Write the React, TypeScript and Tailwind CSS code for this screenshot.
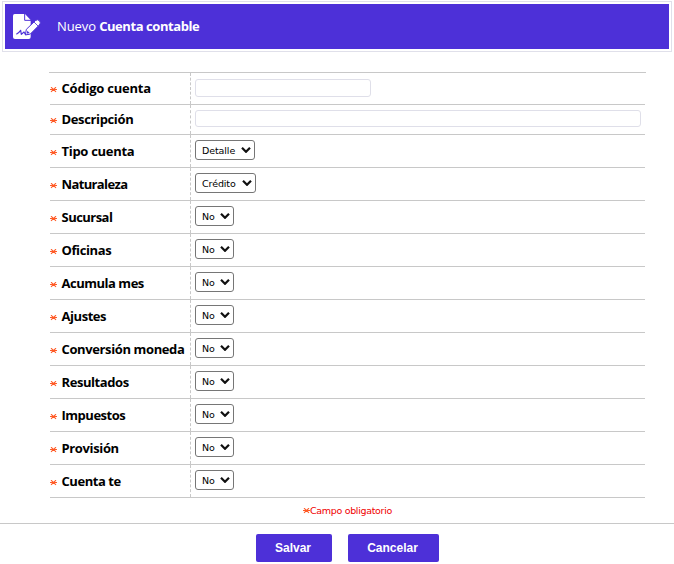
import React from "react";

type Field = {
  label: string;
  row: string;
  input?: string;
  select?: string;
  value?: string;
  text: string;
};

const STANDARD = "h-[33px]";
const SHORT_SELECT = "w-[39px]";

const fields: Field[] = [
  { label: "Código cuenta", row: "h-[32px]", input: "w-[176px] h-[18px] mt-[6px]", text: "pb-[2px] tracking-[-0.22px]" },
  { label: "Descripción", row: "h-[30px]", input: "w-[446px] h-[17px] mt-[5px]", text: "pb-[2px] tracking-[-0.36px]" },
  { label: "Tipo cuenta", row: STANDARD, select: "w-[60px]", value: "Detalle", text: "tracking-[-0.3px]" },
  { label: "Naturaleza", row: STANDARD, select: "w-[61px]", value: "Crédito", text: "tracking-[-0.63px]" },
  { label: "Sucursal", row: STANDARD, select: SHORT_SELECT, value: "No", text: "tracking-[-0.53px]" },
  { label: "Oficinas", row: STANDARD, select: SHORT_SELECT, value: "No", text: "tracking-[-0.38px]" },
  { label: "Acumula mes", row: STANDARD, select: SHORT_SELECT, value: "No", text: "tracking-[-0.48px]" },
  { label: "Ajustes", row: STANDARD, select: SHORT_SELECT, value: "No", text: "tracking-[-0.45px]" },
  { label: "Conversión moneda", row: STANDARD, select: SHORT_SELECT, value: "No", text: "tracking-[-0.38px]" },
  { label: "Resultados", row: STANDARD, select: SHORT_SELECT, value: "No", text: "tracking-[-0.43px]" },
  { label: "Impuestos", row: STANDARD, select: SHORT_SELECT, value: "No", text: "tracking-[-0.48px]" },
  { label: "Provisión", row: STANDARD, select: SHORT_SELECT, value: "No", text: "tracking-[-0.36px]" },
  { label: "Cuenta te", row: STANDARD, select: SHORT_SELECT, value: "No", text: "tracking-[-0.45px]" },
];

function SignedDocument() {
  return (
    <svg viewBox="0 0 84 75" className="h-[25px] w-[28px] shrink-0" fill="none">
      <path d="M5 0H36L53 18V69Q53 75 47 75H6Q0 75 0 69V5Q0 0 5 0Z" fill="white" />
      <path d="M35 0V19H54" stroke="#4d30d8" strokeWidth="3" />
      <path d="M10 61Q17 57 23 49L25 61L33 54L37 61H48" stroke="#4d30d8" strokeWidth="3.5" strokeLinejoin="round" />
      <path d="M37 63L40 46L67 20Q74 14 80 21Q85 27 79 33L52 60Z" fill="white" stroke="#4d30d8" strokeWidth="3" />
      <path d="M63 24L75 36" stroke="#4d30d8" strokeWidth="2.5" />
      <path d="M43 50L50 57L41 59Z" fill="#4d30d8" />
    </svg>
  );
}

function Asterisk({ className = "" }: { className?: string }) {
  return (
    <svg viewBox="0 0 7 6" className={`h-[6px] w-[7px] shrink-0 ${className}`} fill="none" stroke="#ff5a26" strokeWidth="1.15">
      <path d="M0 2.5h7M1 .2l5 4.6M6 .2l-5 4.6" />
    </svg>
  );
}

function Select({ value, width }: { value: string; width: string }) {
  return (
    <button
      type="button"
      className={`mt-[5px] flex h-[20px] items-center justify-between rounded-[3px] border border-[#767676] bg-white pr-[3px] pl-[6px] font-['DejaVu_Sans',sans-serif] text-[9.5px] leading-[16px] tracking-[-0.1px] text-black ${width}`}
    >
      <span className="pt-[2px]">{value}</span>
      <svg viewBox="0 0 10 6" className="h-[6px] w-[10px] shrink-0" fill="none" stroke="#101010" strokeWidth="2.2">
        <path d="M1 .8l4 4 4-4" />
      </svg>
    </button>
  );
}

function FieldRow({ field }: { field: Field }) {
  return (
    <div className={`flex border-b border-[#c8c8c8] ${field.row}`}>
      <label className="flex w-[140px] items-center">
        <Asterisk className="mt-[3px]" />
        <span className={`ml-[4.5px] text-[13px] leading-[18px] font-bold whitespace-nowrap text-black ${field.text}`}>
          {field.label}
        </span>
      </label>
      <div className="flex flex-1 items-start border-l border-dashed border-[#c8c8c8] pl-[4px]">
        {field.input && <input className={`rounded-[3px] border border-[#dfdfe9] bg-white outline-none ${field.input}`} />}
        {field.select && <Select value={field.value ?? ""} width={field.select} />}
      </div>
    </div>
  );
}

export default function App() {
  return (
    <main className="h-[564px] w-[674px] overflow-hidden bg-white pt-px font-['Open_Sans','Noto_Sans',sans-serif]">
      <header className="ml-[2px] h-[51px] w-[670px] border border-[#e0e0ea] p-[2px]">
        <div className="flex h-[45px] items-center bg-[#4d30d8] pl-[8px] text-white">
          <SignedDocument />
          <h1 className="ml-[16px] pb-[2px] text-[13px] leading-[18px] tracking-[-0.1px]">
            Nuevo <b className="tracking-[-0.43px]">Cuenta contable</b>
          </h1>
        </div>
      </header>

      <form>
        <div className="mt-[20px] ml-[49px] h-px w-[597px] bg-[#c8c8c8]" />
        <section className="ml-[50px] w-[595px]">
          {fields.map((field) => (
            <FieldRow key={field.label} field={field} />
          ))}
        </section>
        <p className="flex h-[25px] items-center pl-[303px] font-['DejaVu_Sans',sans-serif] text-[9.5px] tracking-[-0.32px] text-[#f00000]">
          <Asterisk />
          <span className="pt-px">Campo obligatorio</span>
        </p>
        <footer className="flex gap-[16px] border-t border-[#c8c8c8] pt-[10px] pl-[256px] font-['Liberation_Sans',Arial,sans-serif] text-[12px] font-bold text-white">
          <button type="button" className="h-[28px] w-[76px] rounded-[2px] bg-[#4d30d8] pr-[2px]">Salvar</button>
          <button type="button" className="h-[28px] w-[91px] rounded-[2px] bg-[#4d30d8] pr-[2px]">Cancelar</button>
        </footer>
      </form>
    </main>
  );
}
